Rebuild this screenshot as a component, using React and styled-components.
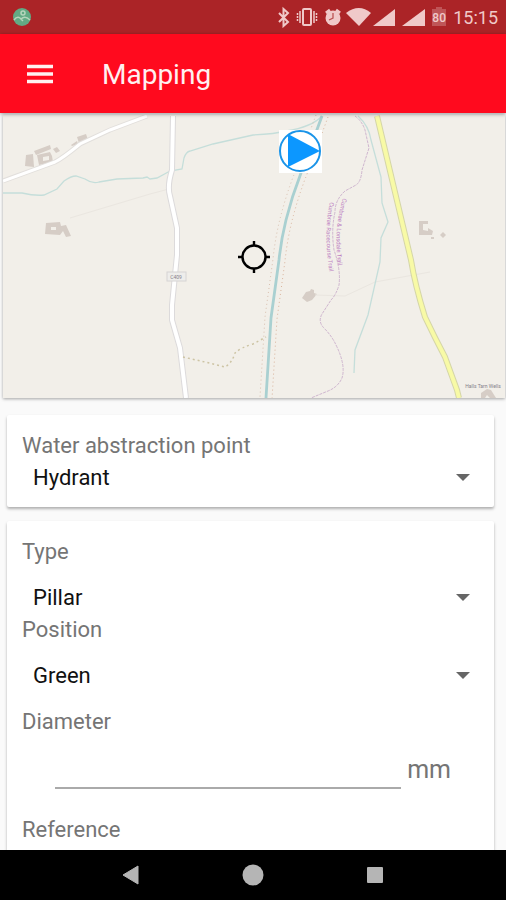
import React, { useState } from 'react'
import styled, { createGlobalStyle } from 'styled-components'

const BUILDINGS = [
  'M26 155l7-1 1 13-9-1z',
  'M34 151l16-6 1 4-15 6z',
  'M37 155l13-3 2 4 1 6-14 3zM43 157v4l6-1v-4z',
  'M53 149l4-2 3 4-4 2z',
  'M71 145l6-4 1 3-6 2z',
  'M77 137l9-3 2 6-9 3z',
  'M46 223l14-1 1 4 5-1 5 11-5 1-3-6-3 4-15-1zM51 227v3h5v-3z',
  'M419 221h9v3h-5v6l5 1v-3l5 3-1 4h-13z',
  'M440 235l3-3 3 3-3 3z',
  'M431 237h3v2h-3z',
  'M302 298l4-6 4-1 1-2 3 1v3l3 1-5 6-5 2z',
  'M481 393l6-4 4 1 5 8h-6l-3-3-2 3h-4z',
]

const CANAL = 'M322 116L301 173Q292 196 286 220Q281 240 279 260L271 318L266 398'
const TRACK = 'M355 116Q362 121 365 130L369 148L362 170Q361 182 356 185L345 191Q335 200 335 212Q331 230 334 250Q341 270 339 285Q336 295 331 300L322 314Q318 321 323 327Q332 336 336 345Q346 365 342 378Q338 387 328 391L311 398'
const LANE = 'M173 116L172 170Q167 186 170 196L177 228V255L172 305V320L180 348L186 398'
const FARM_ROAD = 'M3 181L55 162Q63 158 80 144Q95 137 110 130L147 116'
const MAIN_ROAD = 'M377 116L411 260Q415 285 425 317Q435 338 445 357L457 390L459 398'

function MapView() {
  return (
    <MapCard>
      <MapSvg viewBox="3 115 502 283" preserveAspectRatio="xMidYMid slice" role="img" aria-label="Map">
        <rect x="-500" y="0" width="1500" height="600" fill="#f2efe9" />
        <g fill="#d6cdc6">
          {BUILDINGS.map((d) => <path key={d} d={d} fillRule="evenodd" />)}
        </g>
        <g fill="none">
          <path d="M70 218L150 194L169 189M315 295L345 296L375 282L430 272" stroke="#eae6e0" />
          <path d="M3 193H22Q35 196 44 195L57 189L64 181Q71 176 76 176L85 179Q92 184 99 182L117 179L143 178L147 177L150 179L157 178L170 171L182 169L184 158Q186 152 190 151L213 144L253 135Q275 134 286 131Q312 127 322 116" stroke="#c5deda" strokeWidth="1.3" />
          <path d="M358 116Q369 126 371 140L381 177L382 203L388 222L381 238L380 262L368 315L355 350L354 373" stroke="#c5deda" strokeWidth="1.3" />
          <path d={FARM_ROAD} stroke="#e2dfdc" strokeWidth="5" />
          <path d={LANE} stroke="#dcdadb" strokeWidth="6" />
          <path d={FARM_ROAD} stroke="#fff" strokeWidth="3" />
          <path d={LANE} stroke="#fff" strokeWidth="4" />
          <path d={CANAL} stroke="#a9d0d1" strokeWidth="2.8" />
          <path d={CANAL} stroke="#d9bfae" strokeDasharray="1 3" transform="translate(-6 -1)" />
          <path d={CANAL} stroke="#d9b39b" strokeDasharray="1 3" transform="translate(6 1)" />
          <path d={TRACK} stroke="#cfb6cf" strokeDasharray="3 1" />
          <path d="M183 357L205 362L225 367Q232 363 235 353Q240 348 253 344L266 337" stroke="#cdc4a4" strokeWidth="1.5" strokeDasharray="2 3" />
          <path d={MAIN_ROAD} stroke="#d5d6a8" strokeWidth="6" />
          <path d={MAIN_ROAD} stroke="#f8faa6" strokeWidth="4" />
          <path id="trackLeft" d="M330 202Q323 232 330 275" />
          <path id="trackRight" d="M343 198Q331 235 341 280" />
        </g>
        <TrackText>
          <textPath href="#trackLeft">Cumbrae Racecourse Trail</textPath>
        </TrackText>
        <TrackText>
          <textPath href="#trackRight">Cumbrae &amp; Lonsdale Trail</textPath>
        </TrackText>
        <rect x="167" y="272" width="19" height="9" fill="#eeedeb" stroke="#d6d4d4" />
        <MapText x="176" y="279" textAnchor="middle">C409</MapText>
        <MapText x="483" y="388" textAnchor="middle">Halls Tarn Wells</MapText>

        <rect x="279" y="130" width="43" height="43" fill="#fff" />
        <circle cx="300" cy="151" r="20" fill="#fff" stroke="#1b94e8" strokeWidth="2" />
        <path d="M288 134L320 151L288 167z" fill="#0c97ff" />

        <g fill="none" stroke="#000" strokeWidth="2.4">
          <circle cx="254" cy="257" r="11.5" />
          <path d="M254 241v5M254 268v5M238 257h5M265 257h5" />
        </g>
      </MapSvg>
    </MapCard>
  )
}

function StatusBar() {
  return (
    <Status>
      <svg width="20" height="20" viewBox="0 0 20 20">
        <circle cx="10" cy="10" r="9" fill="#62aa84" />
        <g fill="none" stroke="#b5d5bc" strokeWidth="1.5">
          <path d="M2 13Q5 9 8 11L11 14M9 12Q13 8 18 13" />
          <circle cx="11" cy="6" r="2" />
        </g>
      </svg>
      <svg width="170" height="22" viewBox="276 6 170 22" fill="#f0c9c9">
        <path d="M279 13L288 22L283.500 26V9L288 13L279 22" fill="none" stroke="#f0c9c9" strokeWidth="2" />
        <g fill="none" stroke="#f0c9c9" strokeWidth="2">
          <rect x="303" y="9" width="8" height="16" rx="1" />
          <path d="M300 11v12M314 11v12" strokeWidth="1.500" />
          <path d="M297.500 13v8M316.500 13v8" strokeDasharray="2 1" strokeWidth="1.500" />
        </g>
        <circle cx="333" cy="18" r="7.500" />
        <path d="M326 13l4-3M340 13l-4-3" stroke="#f0c9c9" strokeWidth="3" />
        <path d="M333 13v5l-4 2" fill="none" stroke="#b55" strokeWidth="1.300" />
        <path d="M346 13Q359 3 371 13L359 26z" />
        <path d="M395 9V26H373z" />
        <path d="M425 9V26H402z" />
        <path d="M432 9h4v-2h6v2h4v17h-14z" fill="#bf5557" />
      </svg>
      <Battery>80</Battery>
      <time>15:15</time>
    </Status>
  )
}

function Spinner({ id, label, options, roomy }) {
  const [value, setValue] = useState(options[0])

  return (
    <>
      <Label htmlFor={id}>{label}</Label>
      <SelectRow $roomy={roomy}>
        <Select id={id} value={value} onChange={(e) => setValue(e.target.value)}>
          {options.map((o) => <option key={o}>{o}</option>)}
        </Select>
        <Arrow width="14" height="7" viewBox="0 0 14 7"><path d="M0 0h14L7 7z" fill="#666" /></Arrow>
      </SelectRow>
    </>
  )
}

function App() {
  const [diameter, setDiameter] = useState('')

  return (
    <Screen>
      <GlobalStyle />
      <StatusBar />
      <AppBar>
        <IconButton aria-label="Menu">
          <svg width="26" height="20" viewBox="0 0 26 20"><path d="M0 2.500h26M0 10h26M0 17.500h26" stroke="#fff0f0" strokeWidth="3.6" /></svg>
        </IconButton>
        <Title>Mapping</Title>
      </AppBar>
      <Content>
        <MapView />
        <Card>
          <Spinner id="point" label="Water abstraction point" options={['Hydrant']} />
        </Card>
        <Card>
          <Spinner id="type" label="Type" options={['Pillar']} roomy />
          <Spinner id="position" label="Position" options={['Green']} roomy />
          <Gap />
          <Label htmlFor="diameter">Diameter</Label>
          <InputRow>
            <Input id="diameter" value={diameter} onChange={(e) => setDiameter(e.target.value)} />
            <Unit>mm</Unit>
          </InputRow>
          <Label as="div">Reference</Label>
        </Card>
      </Content>
      <NavBar>
        <NavButton aria-label="Back">
          <svg width="22" height="22" viewBox="0 0 22 22"><path d="M3 11L18 2V20z" fill="#b5b5b5" stroke="#b5b5b5" strokeLinejoin="round" /></svg>
        </NavButton>
        <NavButton aria-label="Home">
          <svg width="22" height="22" viewBox="0 0 22 22"><circle cx="11" cy="11" r="10.500" fill="#b5b5b5" /></svg>
        </NavButton>
        <NavButton aria-label="Recent apps">
          <svg width="22" height="22" viewBox="0 0 22 22"><rect x="3" y="3" width="16" height="16" rx="1" fill="#b5b5b5" /></svg>
        </NavButton>
      </NavBar>
    </Screen>
  )
}

export default App

const GlobalStyle = createGlobalStyle`
  * {
    box-sizing: border-box;
  }
  body {
    margin: 0;
    font-family: Roboto, sans-serif;
    background: #fafafa;
  }
  button {
    border: 0;
    padding: 0;
    background: none;
    cursor: pointer;
  }
`;
const Screen = styled.div`
  display: flex;
  flex-direction: column;
  height: 100vh;
`;
const Status = styled.div`
  display: flex;
  align-items: center;
  flex: none;
  height: 34px;
  padding: 0 8px 0 12px;
  background: #ab2427;
  color: #f0c9c9;
  font-size: 18px;
  line-height: 24px;
  svg + svg {
    margin-left: auto;
  }
  time {
    padding-top: 2px;
  }
`;
const Battery = styled.span`
  width: 14px;
  margin: 0 7px 0 -14px;
  padding-top: 2px;
  font-size: 12px;
  font-weight: 500;
  text-align: center;
`;
const AppBar = styled.header`
  display: flex;
  align-items: center;
  flex: none;
  height: 79px;
  padding: 0 27px;
  background: #ff0a1e;
  box-shadow: 0 1px 4px rgba(0, 0, 0, 0.4);
  z-index: 1;
`;
const IconButton = styled.button`
  display: flex;
`;
const Title = styled.h1`
  margin: 2px 0 0 49px;
  color: #fff0f0;
  font-size: 28px;
  font-weight: 400;
`;
const Content = styled.main`
  display: flex;
  flex-direction: column;
  flex: 1;
  min-height: 0;
  overflow: hidden;
  background: #fafafa;
`;
const MapCard = styled.section`
  flex: none;
  margin: 2px 1px 17px 3px;
  box-shadow: 0 1px 3px rgba(0, 0, 0, 0.35);
`;
const MapSvg = styled.svg`
  display: block;
  width: 100%;
  height: 283px;
`;
const MapText = styled.text`
  fill: #85818a;
  font-size: 5px;
`;
const TrackText = styled(MapText)`
  fill: #bd7fc2;
  font-size: 6px;
`;
const Card = styled.section`
  flex: none;
  margin: 0 12px 14px 7px;
  padding: 16px 15px 14px;
  border-radius: 2px;
  background: #fff;
  box-shadow: 0 2px 3px rgba(0, 0, 0, 0.3);
`;
const Label = styled.label`
  display: block;
  color: #757575;
  font-size: 22px;
  line-height: 30px;
`;
const SelectRow = styled.div`
  display: flex;
  align-items: center;
  height: ${(props) => (props.$roomy ? '48px' : '32px')};
  padding: ${(props) => (props.$roomy ? '12px 9px 0 0' : '0 9px 0 0')};
`;
const Select = styled.select`
  flex: 1;
  height: 32px;
  margin: 0;
  padding: 0 0 0 11px;
  border: 0;
  outline: 0;
  appearance: none;
  background: none;
  color: #111;
  font: 400 22px Roboto, sans-serif;
`;
const Arrow = styled.svg`
  flex: none;
  margin-left: -14px;
  pointer-events: none;
`;
const Gap = styled.div`
  height: 14px;
`;
const InputRow = styled.div`
  display: flex;
  align-items: center;
  margin: 14px 28px 26px 33px;
`;
const Input = styled.input`
  flex: 1;
  min-width: 0;
  height: 38px;
  padding: 0;
  border: 0;
  border-bottom: 2px solid #aaa;
  outline: 0;
  background: none;
  font: 400 22px Roboto, sans-serif;
`;
const Unit = styled.span`
  margin-left: 6px;
  color: #757575;
  font-size: 25px;
  line-height: 30px;
`;
const NavBar = styled.nav`
  display: flex;
  align-items: center;
  justify-content: center;
  gap: 100px;
  flex: none;
  height: 50px;
  background: #000;
`;
const NavButton = styled.button`
  display: flex;
`;
